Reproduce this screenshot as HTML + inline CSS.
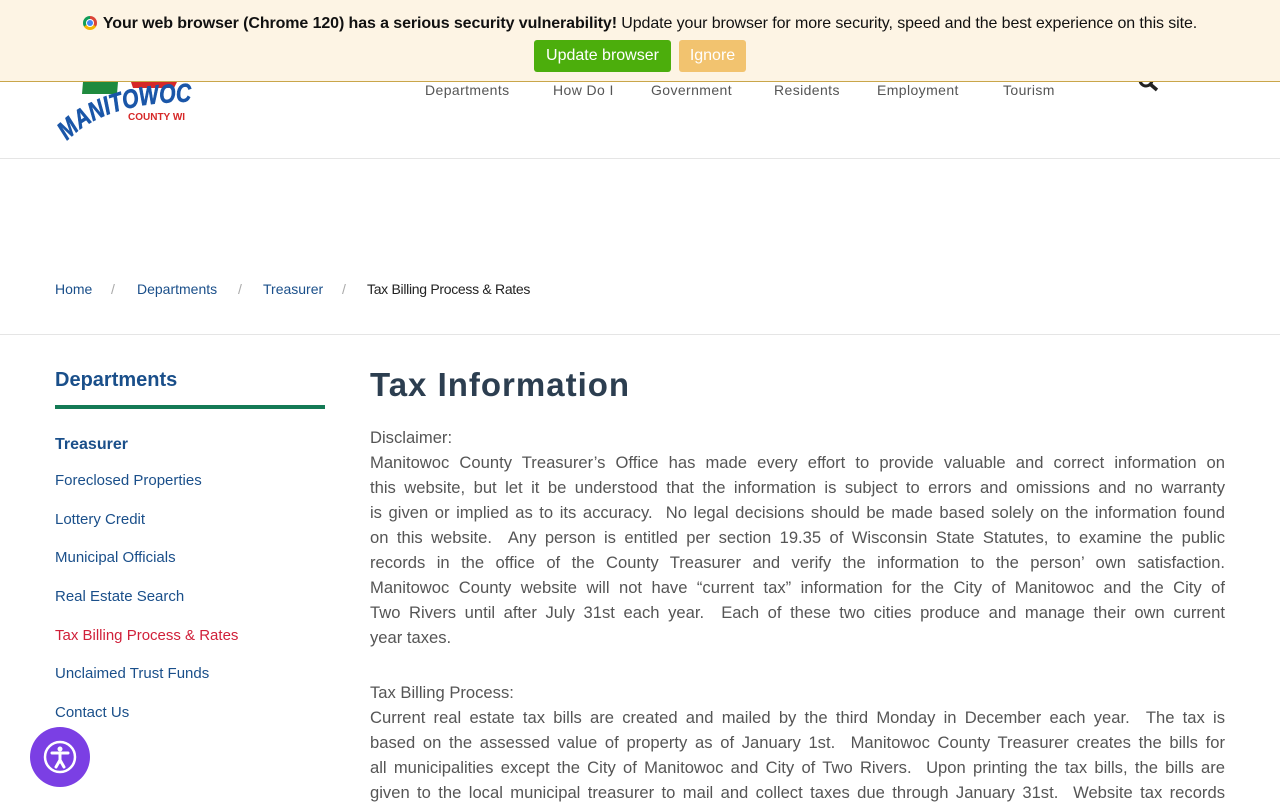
<!DOCTYPE html>
<html><head><meta charset="utf-8"><style>
*{margin:0;padding:0;box-sizing:border-box}
body{width:1280px;height:800px;overflow:hidden;background:#fff;font-family:"Liberation Sans",sans-serif;position:relative}
.bar{position:absolute;top:0;left:0;width:1280px;height:82px;background:#fdf4e4;border-bottom:1px solid #c9a64a;z-index:5;text-align:center}
.bar p{margin-top:15px;font-size:16px;color:#111;letter-spacing:-0.1px}
.chrome{display:inline-block;width:14px;height:14px;border-radius:50%;background:conic-gradient(#db4437 0 120deg,#f4b400 120deg 240deg,#0f9d58 240deg);vertical-align:-2px;margin-right:6px;position:relative}
.chrome:after{content:"";position:absolute;left:4px;top:4px;width:6px;height:6px;border-radius:50%;background:#4285f4;box-shadow:0 0 0 1px #fff}
.btn{position:absolute;top:40px;height:32px;line-height:32px;color:#fff;font-size:16px;border-radius:3px;padding:0 10px}
.hdr{position:absolute;top:0;left:0;width:1280px;height:159px;border-bottom:1px solid #e5e5e5}
nav span{position:absolute;top:82px;font-size:14px;color:#555;letter-spacing:.4px}
.crumb span{position:absolute;top:281px;font-size:14px;color:#1a4f8a}
.crumb i{position:absolute;top:281px;font-size:14px;font-style:normal;color:#aaa}
.line2{position:absolute;top:334px;left:0;width:1280px;border-top:1px solid #e5e5e5}
.side{position:absolute;left:55px;top:369px;width:270px}
.side h3{font-size:20px;color:#1a4f8a;padding-bottom:13px;border-bottom:4px solid #147a55}
.side a{display:block;font-size:15px;color:#1a4f8a;height:38.7px}
.main{position:absolute;left:370px;top:366px;width:855px}
h1{font-size:33px;color:#2c3e50;letter-spacing:1px;margin-bottom:21px}
.main p{font-size:16.6px;line-height:25px;color:#555}
.j{display:block;white-space:nowrap;text-align:justify;text-align-last:justify;height:25px}
</style></head><body>
<div class="hdr">
<svg style="position:absolute;left:55px;top:75px" width="150" height="70" viewBox="0 0 150 70">
<polygon points="28,7 63,7 62,19 27,19" fill="#1f8a3e"/><polygon points="76,7 122,7 119,13 78,13" fill="#d62828"/>
<defs><path id="arc" d="M12,66 Q52,24 148,27"/></defs>
<text font-family="Liberation Sans" font-weight="bold" font-style="italic" font-size="26" fill="#1a56a8" stroke="#1a56a8" stroke-width="0.6" textLength="134" lengthAdjust="spacingAndGlyphs"><textPath href="#arc">MANITOWOC</textPath></text>
<text x="73" y="45" font-family="Liberation Sans" font-weight="bold" font-size="10" fill="#d62828">COUNTY WI</text></svg>
<nav><span style="left:425px">Departments</span><span style="left:553px">How Do I</span><span style="left:651px">Government</span><span style="left:774px">Residents</span><span style="left:877px">Employment</span><span style="left:1003px">Tourism</span></nav>
<svg style="position:absolute;left:1138px;top:72px" width="22" height="22"><circle cx="8" cy="8" r="6" stroke="#222" stroke-width="3" fill="none"/><line x1="12" y1="12" x2="19" y2="18" stroke="#222" stroke-width="3.5"/></svg>
</div>
<div class="bar"><p><span class="chrome"></span><b>Your web browser (Chrome 120) has a serious security vulnerability!</b> Update your browser for more security, speed and the best experience on this site.</p>
<div class="btn" style="left:534px;background:#4cae0c;width:137px">Update browser</div>
<div class="btn" style="left:679px;background:#f2c36f;width:67px;text-align:center">Ignore</div></div>
<div class="crumb"><span style="left:55px">Home</span><i style="left:111px">/</i><span style="left:137px">Departments</span><i style="left:238px">/</i><span style="left:263px">Treasurer</span><i style="left:342px">/</i><span style="left:367px;color:#222;letter-spacing:-0.3px">Tax Billing Process &amp; Rates</span></div>
<div class="line2"></div>
<div class="side"><h3>Departments</h3>
<a style="font-weight:bold;font-size:16px;margin-top:27px;height:36px">Treasurer</a>
<a>Foreclosed Properties</a><a>Lottery Credit</a><a>Municipal Officials</a><a>Real Estate Search</a><a style="color:#d0203a">Tax Billing Process &amp; Rates</a><a>Unclaimed Trust Funds</a><a>Contact Us</a></div>
<div class="main"><h1>Tax Information</h1>
<p>Disclaimer:
<span class="j">Manitowoc County Treasurer’s Office has made every effort to provide valuable and correct information on</span>
<span class="j">this website, but let it be understood that the information is subject to errors and omissions and no warranty</span>
<span class="j">is given or implied as to its accuracy.&nbsp; No legal decisions should be made based solely on the information found</span>
<span class="j">on this website.&nbsp; Any person is entitled per section 19.35 of Wisconsin State Statutes, to examine the public</span>
<span class="j">records in the office of the County Treasurer and verify the information to the person’ own satisfaction.</span>
<span class="j">Manitowoc County website will not have “current tax” information for the City of Manitowoc and the City of</span>
<span class="j">Two Rivers until after July 31st each year.&nbsp; Each of these two cities produce and manage their own current</span>
year taxes.</p>
<p style="margin-top:30px">Tax Billing Process:
<span class="j">Current real estate tax bills are created and mailed by the third Monday in December each year.&nbsp; The tax is</span>
<span class="j">based on the assessed value of property as of January 1st.&nbsp; Manitowoc County Treasurer creates the bills for</span>
<span class="j">all municipalities except the City of Manitowoc and City of Two Rivers.&nbsp; Upon printing the tax bills, the bills are</span>
<span class="j">given to the local municipal treasurer to mail and collect taxes due through January 31st.&nbsp; Website tax records</span></p></div>
<svg style="position:absolute;left:30px;top:727px" width="60" height="60"><circle cx="30" cy="30" r="30" fill="#7b3fe4"/><circle cx="30" cy="30" r="15" fill="none" stroke="#fff" stroke-width="2.5"/><circle cx="30" cy="22" r="2.5" fill="#fff"/><path d="M22 26 L38 26 M30 26 L30 33 M30 33 L26 40 M30 33 L34 40" stroke="#fff" stroke-width="3" fill="none" stroke-linecap="round"/></svg>
</body></html>
